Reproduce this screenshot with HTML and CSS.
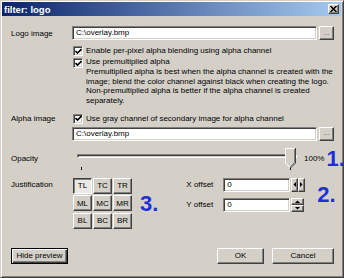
FILE: index.html
```html
<!DOCTYPE html>
<html lang="en">
<head>
    <meta charset="UTF-8">
    <title>filter: logo</title>
    <link rel="stylesheet" href="styles.css">
</head>
<body>

<div class="window">
    <div class="titlebar">
        <span class="title">filter: logo</span>
        <span class="btn close">
            <svg width="7" height="6" viewBox="0 0 7 6"><path d="M0.5 0 L6.5 6 M6.5 0 L0.5 6" stroke="#000" stroke-width="1.5"/></svg>
        </span>
    </div>

    <div class="content">
        <div class="row file-row">
            <span class="label">Logo image</span>
            <span class="edit path">C:\overlay.bmp</span>
            <span class="btn browse">...</span>
        </div>

        <div class="check-row first">
            <span class="check"><svg width="7" height="7" viewBox="0 0 7 7"><path d="M0.5 3 L2.5 5 L6.5 1" stroke="#000" stroke-width="1.6" fill="none"/></svg></span>
            <span>Enable per-pixel alpha blending using alpha channel</span>
        </div>
        <div class="check-row multi">
            <span class="check"><svg width="7" height="7" viewBox="0 0 7 7"><path d="M0.5 3 L2.5 5 L6.5 1" stroke="#000" stroke-width="1.6" fill="none"/></svg></span>
            <span>Use premultiplied alpha<br>
                Premultiplied alpha is best when the alpha channel is created with the<br>
                image; blend the color channel against black when creating the logo.<br>
                Non-premultiplied alpha is better if the alpha channel is created<br>
                separately.</span>
        </div>

        <div class="row alpha-row">
            <span class="label">Alpha image</span>
            <span class="check"><svg width="7" height="7" viewBox="0 0 7 7"><path d="M0.5 3 L2.5 5 L6.5 1" stroke="#000" stroke-width="1.6" fill="none"/></svg></span>
            <span class="check-label">Use gray channel of secondary image for alpha channel</span>
        </div>
        <div class="row file-row second">
            <span class="label"></span>
            <span class="edit path">C:\overlay.bmp</span>
            <span class="btn browse">...</span>
        </div>

        <div class="row opacity-row">
            <span class="label">Opacity</span>
            <div class="slider">
                <span class="track"></span>
                <span class="tick start"></span>
                <span class="tick end"></span>
                <svg class="thumb" width="11" height="20" viewBox="0 0 11 20">
                    <path d="M0.5 15 V0.5 H10.5 V15 L5.5 19.5 Z" fill="#d4d0c8"/>
                    <path d="M0.5 15 V0.5 H10" stroke="#fff" fill="none"/>
                    <path d="M0.5 15 L5 19.5" stroke="#fff" fill="none"/>
                    <path d="M10.5 0 V15 L5.5 20" stroke="#404040" fill="none"/>
                    <path d="M9.5 1 V14.5 L5.5 18.5" stroke="#808080" fill="none"/>
                </svg>
            </div>
            <span class="percent">100%</span>
            <span class="note">1.</span>
        </div>

        <div class="row just-row">
            <span class="label">Justification</span>
            <div class="just-grid">
                <span class="btn pos pressed">TL</span>
                <span class="btn pos">TC</span>
                <span class="btn pos">TR</span>
                <span class="btn pos">ML</span>
                <span class="btn pos">MC</span>
                <span class="btn pos">MR</span>
                <span class="btn pos">BL</span>
                <span class="btn pos">BC</span>
                <span class="btn pos">BR</span>
            </div>
            <span class="note three">3.</span>
            <div class="offsets">
                <div class="offset-list">
                    <div class="offset">
                        <span class="offset-label">X offset</span>
                        <span class="edit num">0</span>
                        <span class="spin horiz">
                            <span class="btn arrow"><svg width="3" height="5" viewBox="0 0 3 5"><path d="M3 0 V5 L0.5 2.5 Z" fill="#000"/></svg></span>
                            <span class="btn arrow"><svg width="3" height="5" viewBox="0 0 3 5"><path d="M0 0 V5 L2.5 2.5 Z" fill="#000"/></svg></span>
                        </span>
                    </div>
                    <div class="offset">
                        <span class="offset-label">Y offset</span>
                        <span class="edit num">0</span>
                        <span class="spin vert">
                            <span class="btn arrow"><svg width="5" height="3" viewBox="0 0 5 3"><path d="M0 3 H5 L2.5 0.5 Z" fill="#000"/></svg></span>
                            <span class="btn arrow"><svg width="5" height="3" viewBox="0 0 5 3"><path d="M0 0 H5 L2.5 2.5 Z" fill="#000"/></svg></span>
                        </span>
                    </div>
                </div>
                <span class="note two">2.</span>
            </div>
        </div>

        <div class="row button-row">
            <span class="btn push focus">Hide preview</span>
            <span class="btn push ok">OK</span>
            <span class="btn push cancel">Cancel</span>
        </div>
    </div>
</div>

</body>
</html>
```

FILE: styles.css
```css
body { margin: 0; font-family: "Liberation Sans", Arial, sans-serif; font-size: 8px; color: #000; background: #d4d0c8; }

.window {
    width: 344px; height: 278px; box-sizing: border-box; overflow: hidden;
    background: #d4d0c8; border: 1px solid; border-color: #d4d0c8 #404040 #404040 #d4d0c8;
    box-shadow: inset 1px 1px #fff, inset -1px -1px #808080; padding: 1px 2px 2px 1px;
}
.titlebar {
    height: 14px; display: flex; align-items: center; justify-content: space-between; padding-left: 2px;
    background: linear-gradient(to right, #0a246a, #a6caf0); color: #fff;
}
.title { font-weight: bold; font-size: 9.5px; }

.btn {
    box-sizing: border-box; background: #d4d0c8; display: flex; align-items: center; justify-content: center;
    border: 1px solid; border-color: #fff #404040 #404040 #fff; box-shadow: inset -1px -1px #808080;
}
.close { width: 11px; height: 10px; margin-right: 2px; }

.content { padding: 10px 7px 0 9px; }
.row { display: flex; align-items: center; }
.label { width: 61px; flex-shrink: 0; }

.edit {
    box-sizing: border-box; background: #fff; padding-left: 3px; white-space: nowrap;
    border: 1px solid; border-color: #808080 #fff #fff #808080;
    box-shadow: inset 1px 1px #404040, inset -1px -1px #d4d0c8;
}
.file-row { height: 14px; }
.file-row.second { margin-top: 3px; }
.path { width: 245px; height: 14px; line-height: 12px; }
.browse { width: 15px; height: 14px; margin-left: 2px; font-size: 7px; color: #555; padding-bottom: 2px; }

.check {
    width: 10px; height: 10px; box-sizing: border-box; flex-shrink: 0; background: #fff;
    display: flex; align-items: center; justify-content: center;
    border: 1px solid; border-color: #808080 #fff #fff #808080;
    box-shadow: inset 1px 1px #404040, inset -1px -1px #d4d0c8;
}
.check-row { display: flex; align-items: flex-start; gap: 3px; margin-left: 62px; }
.check-row .check { margin-top: 1px; }
.check-row.first { margin-top: 5px; line-height: 12px; }
.check-row.multi { line-height: 9.8px; }

.alpha-row { margin-top: 8px; line-height: 10px; }
.alpha-row .check { margin-left: 1px; }
.check-label { margin-left: 3px; }

.opacity-row { margin-top: 6px; height: 24px; }
.slider { position: relative; width: 223px; height: 24px; margin-left: 3px; flex-shrink: 0; }
.track {
    position: absolute; left: 2px; right: 1px; top: 7px; height: 4px; box-sizing: border-box;
    border: 1px solid; border-color: #808080 #fff #fff #808080; box-shadow: inset 1px 1px #404040;
}
.tick { position: absolute; top: 20px; width: 1px; height: 3px; background: #000; }
.tick.start { left: 6px; }
.tick.end { left: 215px; }
.thumb { position: absolute; left: 210px; top: 1px; }
.percent { margin-left: 6px; flex-shrink: 0; }
.note { color: #1f2fd8; font-weight: bold; font-size: 22px; line-height: 18px; flex-shrink: 0; white-space: nowrap; }
.opacity-row .note { margin-left: 2px; }

.just-row { margin-top: 7px; align-items: flex-start; }
.just-row .label { line-height: 14px; }
.just-grid { display: grid; grid-template-columns: repeat(3, 19px); grid-auto-rows: 16px; gap: 1.5px 1px; margin-left: 1px; }
.pos { font-size: 8px; }
.pressed {
    background: #ebe9e5; border-color: #404040 #fff #fff #404040; box-shadow: inset 1px 1px #808080;
}
.note.three { margin: 17px 0 0 8px; }
.offsets { display: flex; align-items: center; margin-left: 28px; }
.offset-list { display: flex; flex-direction: column; gap: 6px; }
.offset { display: flex; align-items: center; }
.offset-label { width: 37px; }
.num { width: 67px; height: 14px; line-height: 12px; }
.spin { display: flex; margin-left: 1px; }
.spin.horiz .arrow { width: 7px; height: 14px; }
.spin.vert { flex-direction: column; }
.spin.vert .arrow { width: 13px; height: 7px; }
.note.two { margin-left: 12px; }

.button-row { margin-top: 19px; }
.push { height: 16px; }
.focus { width: 57px; border-color: #000; box-shadow: inset 1px 1px #fff, inset -1px -1px #404040, inset -2px -2px #808080; }
.ok { width: 47px; margin-left: auto; }
.cancel { width: 62px; margin-left: 8px; }
```
